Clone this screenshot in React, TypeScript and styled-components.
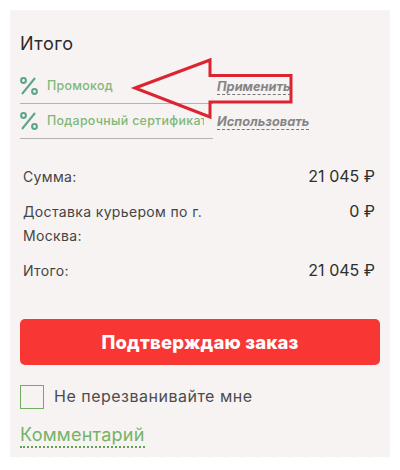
import React from 'react'
import styled, { createGlobalStyle } from 'styled-components'

const GlobalStyle = createGlobalStyle`
  html, body { margin: 0; padding: 0; background: #fff; }
  body { font-family: Inter, "Noto Sans", sans-serif; }
`

const Page = styled.div`
  width: 400px;
  height: 470px;
  padding: 10px;
  box-sizing: border-box;
  overflow: hidden;
`

const Card = styled.div`
  position: relative;
  width: 380px;
  height: 452px;
  box-sizing: border-box;
  padding: 24px 10px 0;
  background: #f7f3f2;
  &::after {
    content: '';
    position: absolute;
    left: 0;
    right: 0;
    bottom: 0;
    height: 5px;
    background:
      linear-gradient(135deg, #fff 50%, transparent 50%) 0 0 / 16px 8px repeat-x,
      linear-gradient(225deg, #fff 50%, transparent 50%) 0 0 / 16px 8px repeat-x;
    transform: scaleY(-1);
  }
`

const Title = styled.h2`
  margin: 0 0 15px;
  font-size: 18px;
  line-height: 20px;
  font-weight: 400;
  letter-spacing: 0.5px;
  color: #2b2b2b;
`

const CodeRow = styled.div`
  display: flex;
  align-items: center;
  height: 35px;
`

const CodeField = styled.div`
  display: flex;
  align-items: center;
  width: 193px;
  height: 35px;
  box-sizing: border-box;
  flex-shrink: 0;
  gap: 9px;
  border-bottom: 1px solid #b5b2b1;
  overflow: hidden;
`

const CodeLabel = styled.span`
  display: block;
  width: 157px;
  padding-bottom: 2px;
  overflow: hidden;
  font-size: 12.4px;
  font-weight: 500;
  letter-spacing: 0.3px;
  color: #7fb877;
  white-space: nowrap;
`

const ApplyLink = styled.a`
  margin-left: 4px;
  font-size: 12.8px;
  line-height: 15px;
  font-weight: 700;
  font-style: italic;
  color: #858585;
  border-bottom: 1px dashed #777;
  white-space: nowrap;
`

const Summary = styled.div`
  margin-top: 26px;
  padding: 0 5px 0 3px;
`

const SummaryRow = styled.div`
  display: flex;
  justify-content: space-between;
  align-items: flex-start;
  margin-bottom: 11px;
`

const SummaryLabel = styled.span`
  width: 200px;
  font-size: 14px;
  line-height: 24px;
  letter-spacing: 0.35px;
  color: #444;
`

const SummaryValue = styled.span`
  margin-top: -1px;
  font-size: 16px;
  line-height: 24px;
  font-weight: 400;
  color: #2e2e2e;
`

const ConfirmButton = styled.button`
  display: block;
  width: 100%;
  height: 46px;
  margin-top: 36px;
  border: none;
  border-radius: 5px;
  background: #f83735;
  color: #fff;
  font-family: Inter, sans-serif;
  font-size: 18.5px;
  font-weight: 800;
  letter-spacing: 0.2px;
`

const CheckRow = styled.label`
  display: flex;
  align-items: center;
  gap: 10px;
  margin-top: 20px;
`

const CheckBox = styled.span`
  width: 24px;
  height: 24px;
  box-sizing: border-box;
  border: 1px solid #6fae5f;
`

const CheckText = styled.span`
  padding-bottom: 2px;
  font-size: 16px;
  letter-spacing: 0.5px;
  color: #4c4c4c;
`

const CommentLink = styled.a`
  display: inline-block;
  margin-top: 14px;
  font-size: 18px;
  line-height: 23px;
  letter-spacing: 0.25px;
  color: #73b469;
  border-bottom: 2px dotted #5da34f;
`

const ArrowOverlay = styled.svg`
  position: absolute;
  left: 120px;
  top: 45px;
`

const PercentIcon = () => (
  <svg width="18" height="18" viewBox="0 0 18 18" fill="none" stroke="#5aa585" strokeWidth="2">
    <circle cx="3.500" cy="3.500" r="2.400" />
    <circle cx="14.500" cy="14.500" r="2.400" />
    <path d="M15 1 2 17" />
  </svg>
)

const App = () => {
  return (
    <Page>
      <GlobalStyle />
      <Card>
        <Title>Итого</Title>
        <CodeRow>
          <CodeField>
            <PercentIcon />
            <CodeLabel>Промокод</CodeLabel>
          </CodeField>
          <ApplyLink>Применить</ApplyLink>
        </CodeRow>
        <CodeRow>
          <CodeField>
            <PercentIcon />
            <CodeLabel>Подарочный сертификат</CodeLabel>
          </CodeField>
          <ApplyLink>Использовать</ApplyLink>
        </CodeRow>
        <Summary>
          <SummaryRow>
            <SummaryLabel>Сумма:</SummaryLabel>
            <SummaryValue>21 045 ₽</SummaryValue>
          </SummaryRow>
          <SummaryRow>
            <SummaryLabel>Доставка курьером по г. Москва:</SummaryLabel>
            <SummaryValue>0 ₽</SummaryValue>
          </SummaryRow>
          <SummaryRow>
            <SummaryLabel>Итого:</SummaryLabel>
            <SummaryValue>21 045 ₽</SummaryValue>
          </SummaryRow>
        </Summary>
        <ConfirmButton>Подтверждаю заказ</ConfirmButton>
        <CheckRow>
          <CheckBox />
          <CheckText>Не перезванивайте мне</CheckText>
        </CheckRow>
        <CommentLink>Комментарий</CommentLink>
        <ArrowOverlay width="170" height="70" viewBox="0 0 170 70" fill="none">
          <path d="M5 33 80 5V20.500H161V47H80V62Z" stroke="#dc2430" strokeWidth="3" />
        </ArrowOverlay>
      </Card>
    </Page>
  )
}

export default App
